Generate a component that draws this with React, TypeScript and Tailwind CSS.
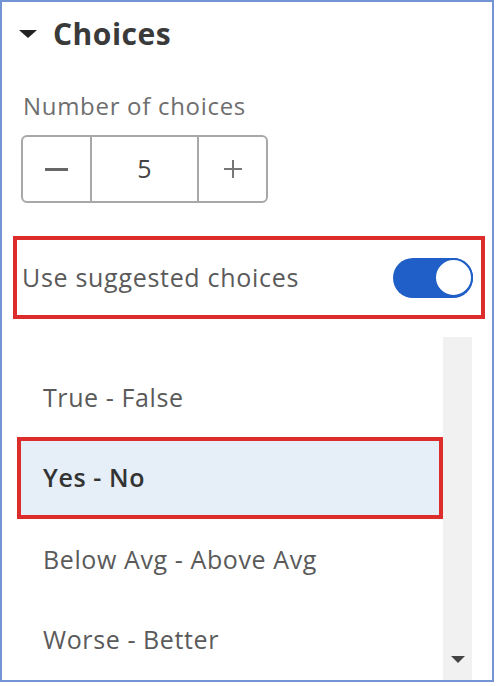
import React from "react";

export default function App() {
  const font = { fontFamily: '"Open Sans", "Liberation Sans", sans-serif' };
  return (
    <div className="w-[496px] h-[686px] bg-white" style={font}>
      <div className="w-[494px] h-[682px] border-2 border-[#7394d2] bg-white flex flex-col overflow-hidden">
        <div className="h-[64px] flex items-center pl-4 gap-[15px] shrink-0">
          <svg width="20" height="10" viewBox="0 0 20 10">
            <polygon points="1,1 19,1 10,9" fill="#222" />
          </svg>
          <span className="text-[30px] font-bold text-[#3a3a3a] leading-none tracking-[0.5px]">Choices</span>
        </div>
        <div className="mt-[25px] ml-[21px] h-[30px] flex items-center text-[24px] tracking-[0.7px] text-[#6e6e6e] leading-none shrink-0">
          Number of choices
        </div>
        <div className="mt-[14px] ml-[19px] w-[247px] h-[68px] border-2 border-[#a8a8a8] rounded-md flex shrink-0">
          <div className="w-[69px] flex items-center justify-center border-r-2 border-[#a8a8a8]">
            <div className="w-[23px] h-[3px] bg-[#666]" />
          </div>
          <div className="w-[107px] flex items-center justify-center border-r-2 border-[#a8a8a8] text-[25px] text-[#444]">
            5
          </div>
          <div className="flex-1 flex items-center justify-center">
            <svg width="22" height="22" viewBox="0 0 22 22">
              <path d="M11 2v18M2 11h18" stroke="#777" strokeWidth="2" />
            </svg>
          </div>
        </div>
        <div className="mt-[33px] ml-[11px] w-[472px] h-[83px] border-4 border-[#dd2c2c] flex items-center justify-between pl-[5px] pr-[8px] shrink-0">
          <span className="text-[25px] tracking-[0.7px] text-[#5a5a5a]">Use suggested choices</span>
          <div className="w-[80px] h-[40px] rounded-full bg-[#1f5fc7] flex items-center justify-end">
            <div className="w-[39px] h-[39px] rounded-full bg-white border-2 border-[#1f5fc7]" />
          </div>
        </div>
        <div className="mt-[18px] flex flex-1">
          <div className="w-[441px] pt-[22px] flex flex-col text-[25px] tracking-[0.6px] text-[#5a5a5a]">
            <div className="h-[78px] flex items-center pl-[41px]">True - False</div>
            <div className="ml-[15px] h-[82px] border-4 border-[#dd2c2c] bg-[#e6eef8] flex items-center pl-[22px] font-semibold text-[#333]">
              Yes - No
            </div>
            <div className="h-[81px] flex items-center pl-[41px]">Below Avg - Above Avg</div>
            <div className="h-[80px] flex items-center pl-[41px]">Worse - Better</div>
          </div>
          <div className="w-[29px] bg-[#f1f1f1] flex flex-col justify-end items-center pb-[17px]">
            <svg width="14" height="7" viewBox="0 0 14 7">
              <polygon points="0,0 14,0 7,7" fill="#444" />
            </svg>
          </div>
        </div>
      </div>
    </div>
  );
}
